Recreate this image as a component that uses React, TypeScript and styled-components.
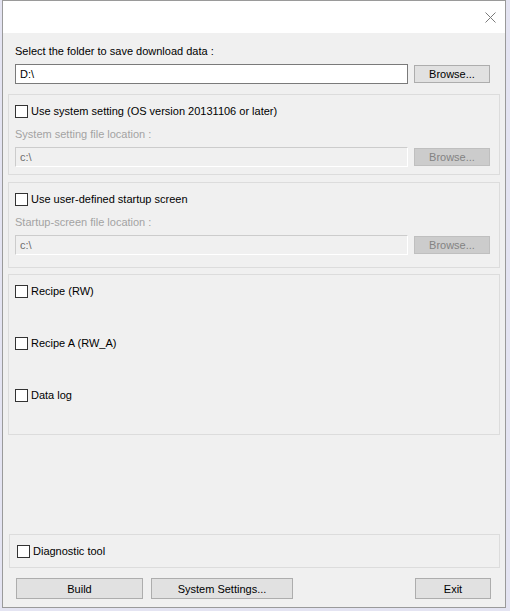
import React from "react";
import styled, { createGlobalStyle } from "styled-components";

const Global = createGlobalStyle`
  html, body { margin: 0; padding: 0; }
  body {
    background: #e4e4f2;
    font-family: "Liberation Sans", Arial, sans-serif;
    font-size: 11px;
    color: #000;
  }
`;

const Window = styled.div`
  box-sizing: border-box;
  margin-left: 2px;
  width: 504px;
  height: 608px;
  border: 1px solid #9a9a9a;
  background: #f0f0f0;
  display: flex;
  flex-direction: column;
`;

const TitleBar = styled.div`
  height: 32px;
  background: #ffffff;
  display: flex;
  justify-content: flex-end;
  align-items: center;
  padding-right: 9px;
  flex-shrink: 0;
`;

const Body = styled.div`
  flex: 1;
  display: flex;
  flex-direction: column;
  padding: 11px 5px 8px 5px;
`;

const Label = styled.div<{ $disabled?: boolean; $indent?: number }>`
  line-height: 15px;
  height: 15px;
  white-space: nowrap;
  padding-left: ${(p) => p.$indent ?? 0}px;
  color: ${(p) => (p.$disabled ? "#a3a3a3" : "#000")};
`;

const FieldRow = styled.div<{ $indent: number; $top: number }>`
  display: flex;
  align-items: center;
  gap: 6px;
  margin-top: ${(p) => p.$top}px;
  padding-left: ${(p) => p.$indent}px;
`;

const TextBox = styled.div<{ $disabled?: boolean }>`
  box-sizing: border-box;
  width: 393px;
  height: 20px;
  display: flex;
  align-items: center;
  padding-left: 4px;
  background: ${(p) => (p.$disabled ? "#f0f0f0" : "#ffffff")};
  border: 1px solid ${(p) => (p.$disabled ? "#cccccc" : "#7a7a7a")};
  border-right-color: ${(p) => (p.$disabled ? "#ffffff" : "#7a7a7a")};
  border-bottom-color: ${(p) => (p.$disabled ? "#ffffff" : "#7a7a7a")};
  color: ${(p) => (p.$disabled ? "#6d6d6d" : "#000")};
`;

const Button = styled.div<{ $w: number; $h?: number; $disabled?: boolean }>`
  box-sizing: border-box;
  width: ${(p) => p.$w}px;
  height: ${(p) => p.$h ?? 18}px;
  display: flex;
  align-items: center;
  justify-content: center;
  background: ${(p) => (p.$disabled ? "#cccccc" : "#e1e1e1")};
  border: 1px solid ${(p) => (p.$disabled ? "#bfbfbf" : "#adadad")};
  color: ${(p) => (p.$disabled ? "#838383" : "#000")};
`;

const Group = styled.div<{ $top: number; $height: number; $shift?: number }>`
  box-sizing: border-box;
  margin-top: ${(p) => p.$top}px;
  margin-left: ${(p) => p.$shift ?? 0}px;
  height: ${(p) => p.$height}px;
  border: 1px solid #dcdcdc;
  display: flex;
  flex-direction: column;
`;

const CheckRow = styled.div<{ $top: number; $indent?: number }>`
  display: flex;
  align-items: center;
  gap: 3px;
  margin-top: ${(p) => p.$top}px;
  padding-left: ${(p) => p.$indent ?? 6}px;
  height: 15px;
  line-height: 15px;
  white-space: nowrap;
`;

const Box = styled.span`
  box-sizing: border-box;
  width: 13px;
  height: 13px;
  border: 1px solid #333333;
  background: #ffffff;
  flex-shrink: 0;
`;

const Spacer = styled.div`
  flex: 1;
`;

const ButtonBar = styled.div`
  display: flex;
  align-items: center;
  padding-left: 8px;
  padding-right: 9px;
  margin-top: 10px;
`;

const Check = ({ top, children, indent }: { top: number; children: React.ReactNode; indent?: number }) => (
  <CheckRow $top={top} $indent={indent}>
    <Box />
    <span>{children}</span>
  </CheckRow>
);

export default function App() {
  return (
    <>
      <Global />
      <Window>
        <TitleBar>
          <svg width="11" height="11" viewBox="0 0 11 11">
            <path d="M0.5 0.5 L10.5 10.5 M10.5 0.5 L0.5 10.5" stroke="#7a7a7a" strokeWidth="1" />
          </svg>
        </TitleBar>
        <Body>
          <Label $indent={7}>Select the folder to save download data :</Label>
          <FieldRow $indent={7} $top={5}>
            <TextBox>D:\</TextBox>
            <Button $w={76}>Browse...</Button>
          </FieldRow>

          <Group $top={10} $height={81}>
            <Check top={9}>Use system setting (OS version 20131106 or later)</Check>
            <Label $disabled $indent={6} style={{ marginTop: 8 }}>System setting file location :</Label>
            <FieldRow $indent={6} $top={5}>
              <TextBox $disabled>c:\</TextBox>
              <Button $w={76} $disabled>Browse...</Button>
            </FieldRow>
          </Group>

          <Group $top={7} $height={86}>
            <Check top={9}>Use user-defined startup screen</Check>
            <Label $disabled $indent={6} style={{ marginTop: 8 }}>Startup-screen file location :</Label>
            <FieldRow $indent={6} $top={5}>
              <TextBox $disabled>c:\</TextBox>
              <Button $w={76} $disabled>Browse...</Button>
            </FieldRow>
          </Group>

          <Group $top={6} $height={161}>
            <Check top={9}>Recipe (RW)</Check>
            <Check top={37}>Recipe A (RW_A)</Check>
            <Check top={37}>Data log</Check>
          </Group>

          <Spacer />

          <Group $top={0} $height={34} $shift={1}>
            <Check top={9} indent={7}>Diagnostic tool</Check>
          </Group>

          <ButtonBar>
            <Button $w={127} $h={21}>Build</Button>
            <Button $w={142} $h={21} style={{ marginLeft: 8 }}>System Settings...</Button>
            <Spacer />
            <Button $w={76} $h={21}>Exit</Button>
          </ButtonBar>
        </Body>
      </Window>
    </>
  );
}
